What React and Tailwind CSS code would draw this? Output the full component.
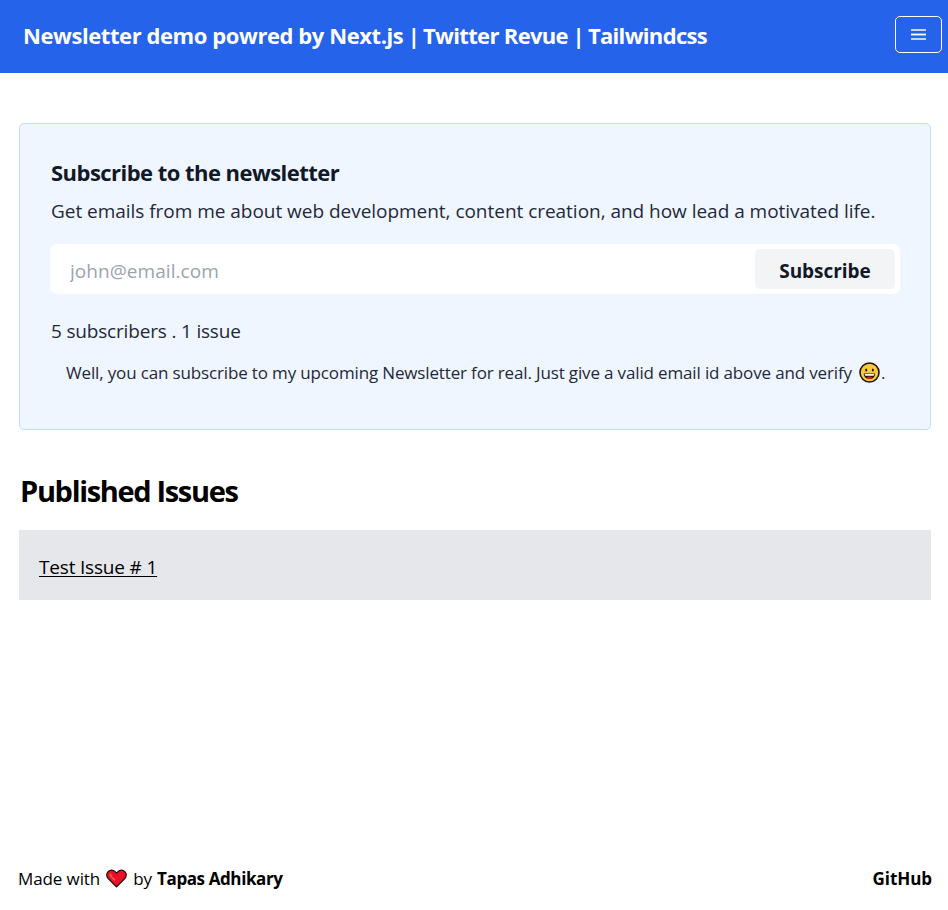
import React from "react";

function MenuIcon() {
  return (
    <svg width="15" height="11" viewBox="0 0 15 11" shapeRendering="crispEdges" aria-hidden="true">
      <path fill="#c4d4fa" d="M0 0h15v2H0zM0 9h15v2H0z" />
      <path fill="#7fa2f3" d="M0 4h15v3H0z" />
      <path fill="#fff" d="M0 5h15v1H0z" />
    </svg>
  );
}

function GrinIcon() {
  return (
    <svg className="mb-px shrink-0" width="21" height="21" viewBox="0 0 21 21" aria-hidden="true">
      <circle cx="10.5" cy="10.5" r="9.5" fill="#ffc83d" stroke="#1a1408" strokeWidth="1.6" />
      <ellipse cx="7.2" cy="8" rx="1" ry="1.6" fill="#1a1408" />
      <ellipse cx="13.8" cy="8" rx="1" ry="1.6" fill="#1a1408" />
      <path d="M4.8 11.6h11.4c0 3.3-2.4 5.5-5.7 5.5s-5.7-2.2-5.7-5.5z" fill="#1a1408" />
      <path d="M5.6 12h9.8c-.2.9-.5 1.300-.9 1.800h-8c-.4-.5-.8-.9-.9-1.800z" fill="#fff" />
      <path d="M7.2 16c.7-1.100 1.900-1.600 3.300-1.600s2.600.5 3.300 1.600c-.9.700-2.100 1.100-3.300 1.100s-2.400-.4-3.300-1.100z" fill="#e81224" />
    </svg>
  );
}

function HeartIcon() {
  return (
    <svg className="mb-px shrink-0" width="21" height="19" viewBox="0 0 21 19" aria-hidden="true">
      <path
        d="M10.5 17.9L2.2 9.6C.3 7.6.3 4.5 2.2 2.600s4.900-1.900 6.800 0l1.500 1.500L12 2.600c1.900-1.900 4.900-1.900 6.800 0s1.900 5 0 7z"
        fill="#e81224"
        stroke="#1c0508"
        strokeWidth="1.3"
        strokeLinejoin="round"
      />
      <path d="M4.3 5.2c.3 1.800 1.900 3.900 4.300 5.500" fill="none" stroke="#f0525c" strokeWidth="1.8" strokeLinecap="round" />
    </svg>
  );
}

export default function App() {
  return (
    <div className="flex h-[910px] flex-col bg-white font-['Open_Sans','Noto_Sans',sans-serif] text-black">
      <header className="flex h-[73px] items-start justify-between bg-[#2563eb] pr-1.5 pl-[23px] text-white">
        <h1 className="h-[71px] whitespace-nowrap text-[22px] leading-[71px] font-bold tracking-[-0.67px]">
          <span className="tracking-[-0.42px]">Newsletter demo powred by Next.js</span>
          <span className="tracking-[-1.3px]"> | </span>
          Twitter Revue
          <span className="tracking-[-1.2px]"> | </span>
          Tailwindcss
        </h1>
        <button
          aria-label="Menu"
          className="mt-4 flex h-[37px] w-[47px] items-center justify-center rounded-[5px] border border-white"
        >
          <MenuIcon />
        </button>
      </header>

      <main className="flex flex-1 flex-col pt-[50px] pr-[17px] pl-[19px]">
        <section className="h-[307px] rounded-[5px] border border-[#bfdbfe] bg-[#eff6ff] px-[30px] pt-[33px] text-[19px] leading-[30px] whitespace-nowrap text-[#1f2937]">
          <h2 className="pl-px text-[22px] leading-[30px] font-bold tracking-[-0.54px] text-[#111827]">
            Subscribe to the newsletter
          </h2>
          <p className="mt-[9px] pl-px tracking-[-0.03px]">
            Get emails from me about web development, content creation, and how lead a motivated life.
          </p>
          <form className="mt-[18px] flex h-[50px] items-center rounded-[7px] bg-white p-[5px]">
            <input
              type="email"
              placeholder="john@email.com"
              className="h-10 min-w-0 flex-1 pt-[3px] pl-[15px] tracking-[0.05px] outline-none placeholder:text-[#9ca3af]"
            />
            <button
              type="button"
              className="h-10 w-[140px] rounded-[5px] bg-[#f3f4f6] pt-[3px] font-bold tracking-[-0.04px] text-[#111827]"
            >
              Subscribe
            </button>
          </form>
          <p className="mt-[22px] pl-px tracking-[-0.18px]">5 subscribers . 1 issue</p>
          <p className="mt-3 flex items-center pl-4 text-[17px] tracking-[-0.15px]">
            <span className="mr-[7px]">
              Well, you can subscribe to my upcoming Newsletter for real. Just give a valid email id above and verify
            </span>
            <GrinIcon />
            <span className="ml-px">.</span>
          </p>
        </section>

        <h2 className="mt-[41px] pl-px text-[29px] leading-10 font-bold tracking-[-1.33px]">Published Issues</h2>
        <div className="mt-[19px] h-[70px] bg-[#e5e7eb] pt-[22px] pl-5 text-[19px] leading-[30px]">
          <a href="#" className="tracking-[-0.18px] underline decoration-1 underline-offset-2">
            Test Issue # 1
          </a>
        </div>
      </main>

      <footer className="flex h-[46px] items-start justify-between pr-4 pl-[18px] text-[17px] leading-[30px]">
        <p className="flex items-center">
          <span className="mr-[6px] tracking-[-0.1px]">Made with</span>
          <HeartIcon />
          <span className="mr-[5px] ml-[6px]">by</span>
          <strong className="font-bold tracking-[-0.4px]">Tapas Adhikary</strong>
        </p>
        <strong className="font-bold tracking-[-0.05px]">GitHub</strong>
      </footer>
    </div>
  );
}
